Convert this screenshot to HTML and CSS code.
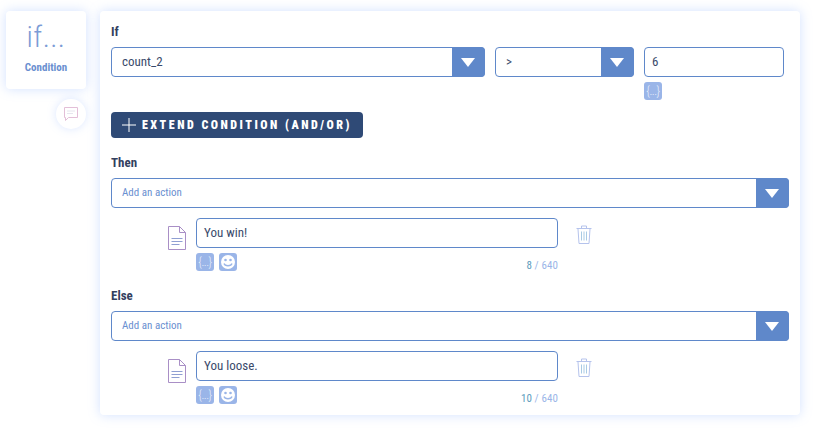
FILE: index.html
```html
<!DOCTYPE html>
<html lang="en">

<head>
    <meta charset="UTF-8">
    <title>Condition</title>
    <link rel="stylesheet" href="styles.css">
</head>

<body>
    <div class="page">
        <!--left column-->
        <div class="side">
            <div class="card">
                <div class="card-title">if...</div>
                <div class="card-name">Condition</div>
            </div>
            <div class="comment">
                <svg width="16" height="16" viewBox="0 0 16 16" fill="none">
                    <path d="M1.5 1.5h13v10h-9l-3 3v-3h-1z" stroke="#e3bfd8" stroke-width="1"/>
                    <path d="M4 5h8M4 7.5h6" stroke="#e6e6ee" stroke-width="1"/>
                </svg>
            </div>
        </div>

        <div class="panel">
            <div class="label label-if">If</div>
            <div class="cond-row">
                <div class="select sel-var"><span>count_2</span><i class="arrow"></i></div>
                <div class="select sel-op"><span>&gt;</span><i class="arrow"></i></div>
                <div class="value-col">
                    <div class="input value-input">6</div>
                    <div class="tools">
                        <div class="tool">{...}</div>
                    </div>
                </div>
            </div>
            <div class="extend">
                <svg width="16" height="16" viewBox="0 0 16 16"><path d="M8 1v14M1 8h14" stroke="#fff" stroke-width="1"/></svg>
                <span>EXTEND CONDITION (AND/OR)</span>
            </div>

            <div class="label label-then">Then</div>
            <div class="select sel-action"><span>Add an action</span><i class="arrow"></i></div>
            <div class="action">
                <svg class="doc" width="18" height="24" viewBox="0 0 18 24" fill="none">
                    <path d="M.5.5h11l6 6v17H.5z" stroke="#a98fc6"/>
                    <path d="M11.5.5v6h6" stroke="#a98fc6"/>
                    <path d="M3.500 12.500h11M3.500 15.500h11M3.500 18.500h8" stroke="#8f9fd2"/>
                </svg>
                <div class="action-main">
                    <div class="input">You win!</div>
                    <div class="action-foot">
                        <div class="tools">
                            <div class="tool">{...}</div>
                            <div class="tool">
                                <svg width="16" height="16" viewBox="0 0 16 16" fill="none">
                                    <circle cx="8" cy="8" r="7" fill="#fff"/>
                                    <circle cx="5.500" cy="6" r="1.300" fill="#9ab5e8"/>
                                    <circle cx="10.500" cy="6" r="1.300" fill="#9ab5e8"/>
                                    <path d="M4 9.500c1 3 7 3 8 0" stroke="#9ab5e8" stroke-width="1.300"/>
                                </svg>
                            </div>
                        </div>
                        <div class="count"><b>8</b> / 640</div>
                    </div>
                </div>
                <svg class="trash" width="16" height="19" viewBox="0 0 16 19" fill="none">
                    <path d="M.5 3.500h15M5.500 3V1h5v2M2 4l1 14.500h10L14 4" stroke="#b5c3ec"/>
                    <path d="M5.500 6.500v9M8 6.500v9M10.500 6.500v9" stroke="#a9cbe4"/>
                </svg>
            </div>

            <div class="label label-else">Else</div>
            <div class="select sel-action"><span>Add an action</span><i class="arrow"></i></div>
            <div class="action">
                <svg class="doc" width="18" height="24" viewBox="0 0 18 24" fill="none">
                    <path d="M.5.5h11l6 6v17H.5z" stroke="#a98fc6"/>
                    <path d="M11.5.5v6h6" stroke="#a98fc6"/>
                    <path d="M3.500 12.500h11M3.500 15.500h11M3.500 18.500h8" stroke="#8f9fd2"/>
                </svg>
                <div class="action-main">
                    <div class="input">You loose.</div>
                    <div class="action-foot">
                        <div class="tools">
                            <div class="tool">{...}</div>
                            <div class="tool">
                                <svg width="16" height="16" viewBox="0 0 16 16" fill="none">
                                    <circle cx="8" cy="8" r="7" fill="#fff"/>
                                    <circle cx="5.500" cy="6" r="1.300" fill="#9ab5e8"/>
                                    <circle cx="10.500" cy="6" r="1.300" fill="#9ab5e8"/>
                                    <path d="M4 9.500c1 3 7 3 8 0" stroke="#9ab5e8" stroke-width="1.300"/>
                                </svg>
                            </div>
                        </div>
                        <div class="count"><b>10</b> / 640</div>
                    </div>
                </div>
                <svg class="trash" width="16" height="19" viewBox="0 0 16 19" fill="none">
                    <path d="M.5 3.500h15M5.500 3V1h5v2M2 4l1 14.500h10L14 4" stroke="#b5c3ec"/>
                    <path d="M5.500 6.500v9M8 6.500v9M10.500 6.500v9" stroke="#a9cbe4"/>
                </svg>
            </div>
        </div>
    </div>
</body>

</html>
```

FILE: styles.css
```css
* {
    margin: 0;
    padding: 0;
    box-sizing: border-box;
}

html,
body {
    height: 100%;
    overflow: hidden;
}

body {
    background: #fff;
    font-family: "Roboto", "Liberation Sans", sans-serif;
    font-stretch: 75%;
    color: #3a4a6b;
}

.page {
    display: flex;
    align-items: flex-start;
    gap: 14px;
    padding: 11px 13px 0 6px;
}

.side {
    width: 80px;
    display: flex;
    flex-direction: column;
    align-items: flex-end;
    gap: 10px;
}

.card {
    width: 80px;
    height: 78px;
    background: #fff;
    border-radius: 4px;
    box-shadow: 0 0 12px rgba(125, 170, 255, .35);
    text-align: center;
    padding-top: 9px;
}

.card-title {
    font-size: 30px;
    line-height: 34px;
    font-weight: 300;
    color: #7c9cd6;
    letter-spacing: .4px;
}

.card-name {
    margin-top: 7px;
    font-size: 11px;
    line-height: 14px;
    font-weight: 700;
    color: #6a8fd0;
}

.comment {
    width: 30px;
    height: 30px;
    border-radius: 50%;
    background: #fff;
    box-shadow: 0 0 10px rgba(125, 170, 255, .28);
    display: flex;
    align-items: center;
    justify-content: center;
}

.panel {
    width: 700px;
    height: 404px;
    background: #fff;
    border-radius: 4px;
    box-shadow: 0 0 12px rgba(125, 170, 255, .35);
    padding: 13px 11px 0;
}

.label {
    font-size: 13px;
    line-height: 15px;
    font-weight: 700;
    color: #33405f;
}

.cond-row {
    display: flex;
    gap: 10px;
    margin-top: 8px;
}

.select,
.input {
    height: 30px;
    border: 1px solid #5f88ca;
    border-radius: 4px;
    background: #fff;
    font-size: 13px;
    line-height: 28px;
}

.select {
    position: relative;
    display: flex;
    padding-left: 10px;
}

.arrow {
    position: absolute;
    top: -1px;
    right: -1px;
    bottom: -1px;
    width: 33px;
    background: #5f88ca;
    border-radius: 0 4px 4px 0;
}

.arrow::after {
    content: "";
    position: absolute;
    left: 9px;
    top: 11px;
    border-style: solid;
    border-width: 9px 7px 0;
    border-color: #fff transparent transparent;
}

.sel-var {
    width: 374px;
}

.sel-op {
    width: 139px;
}

.value-col {
    width: 140px;
}

.input {
    padding-left: 7px;
}

.tools {
    display: flex;
    gap: 5px;
    margin-top: 5px;
}

.tool {
    width: 18px;
    height: 18px;
    background: #9ab5e8;
    border-radius: 3px;
    color: #e8effb;
    font-size: 12px;
    font-weight: 300;
    letter-spacing: -.5px;
    display: flex;
    align-items: center;
    justify-content: center;
}

.extend {
    width: 252px;
    height: 26px;
    margin-top: 12px;
    background: #2f4a76;
    border-radius: 4px;
    display: flex;
    align-items: center;
    gap: 5px;
    padding-left: 10px;
    color: #fff;
    font-size: 12px;
    font-weight: 900;
    letter-spacing: 2.5px;
}

.label-then {
    margin-top: 17px;
}

.sel-action {
    width: 678px;
    margin-top: 8px;
    font-size: 11px;
    color: #6a8fd0;
}

.action {
    display: flex;
    align-items: flex-start;
    margin-top: 10px;
    padding-left: 57px;
}

.doc {
    margin-top: 8px;
    margin-right: 10px;
}

.action-main {
    width: 362px;
}

.action-foot {
    display: flex;
    justify-content: space-between;
}

.count {
    margin-top: 12px;
    font-size: 11px;
    line-height: 12px;
    letter-spacing: .1px;
    color: #9ab5e8;
}

.count b {
    color: #5c9bbd;
    font-weight: 400;
}

.trash {
    margin-top: 7px;
    margin-left: 18px;
}

.label-else {
    margin-top: 16px;
}
```
